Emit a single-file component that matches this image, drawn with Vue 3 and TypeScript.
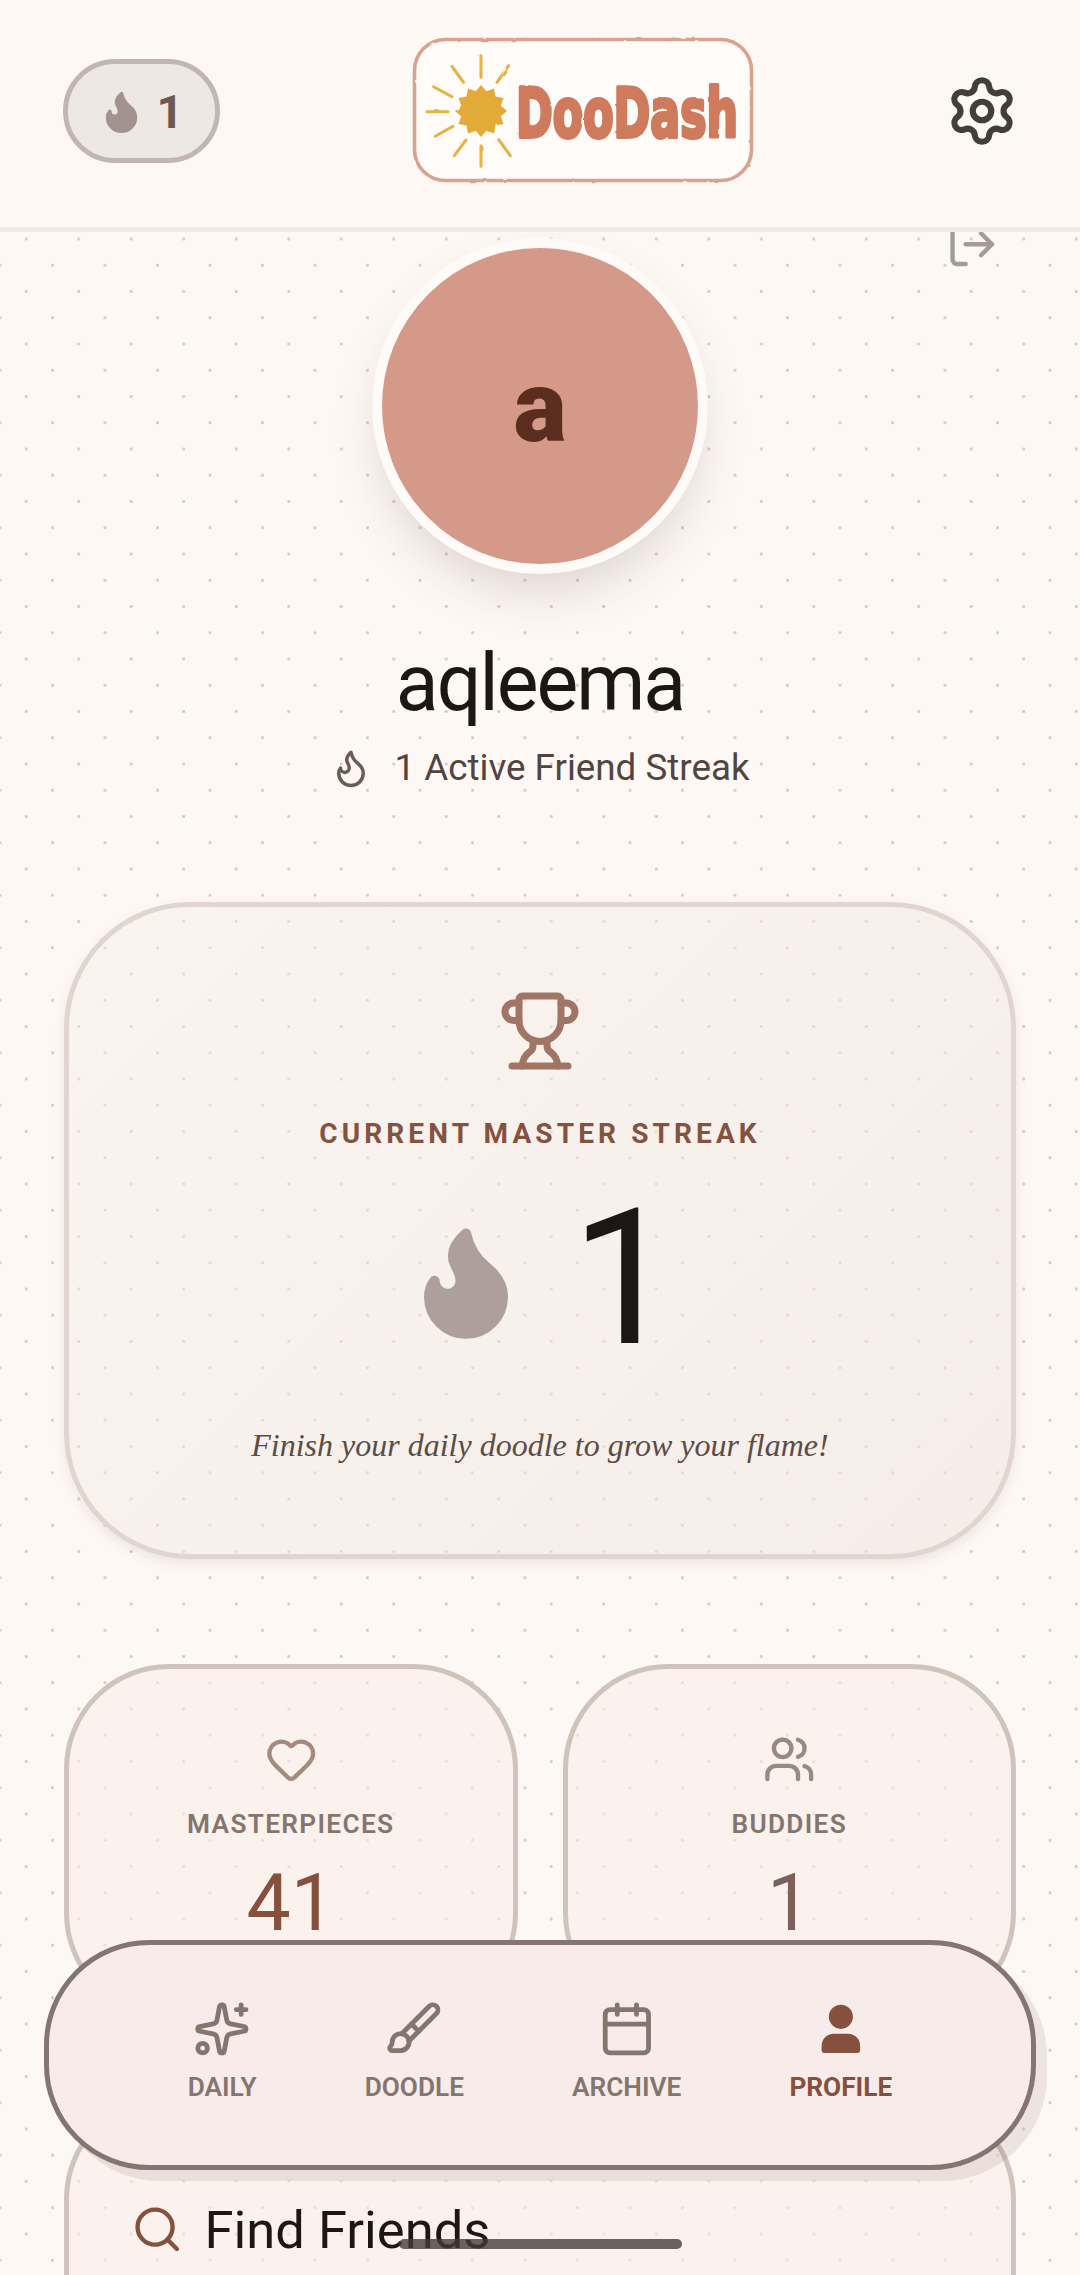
<template>
  <div class="screen">
    <header class="topbar">
      <div class="streak-pill">
        <svg class="pill-flame" viewBox="0 0 24 24"><path :d="flamePath" /></svg>
        <span>1</span>
      </div>

      <svg class="logo" viewBox="0 0 342 146" role="img" aria-label="DooDash">
        <defs>
          <filter id="rough" x="-5%" y="-5%" width="110%" height="110%">
            <feTurbulence type="fractalNoise" baseFrequency="0.09" numOctaves="2" seed="4" />
            <feDisplacementMap in="SourceGraphic" scale="2.2" />
            <feGaussianBlur stdDeviation="0.6" />
          </filter>
        </defs>
        <g filter="url(#rough)">
          <rect x="2.5" y="2.5" width="337" height="141" rx="31" fill="#fffbf8" stroke="#d9a28d" stroke-width="3.6" />
          <path v-for="ray in sunRays" :key="ray" :d="ray" class="ray" />
          <polygon :points="sunPoints" fill="#e2ab37" />
          <text x="104" y="100" class="logo-text" textLength="222" lengthAdjust="spacingAndGlyphs">DooDash</text>
        </g>
      </svg>

      <svg class="gear" viewBox="0 0 24 24">
        <path d="M9.671 4.136a2.34 2.34 0 0 1 4.659 0 2.34 2.34 0 0 0 3.319 1.915 2.34 2.34 0 0 1 2.33 4.033 2.34 2.34 0 0 0 0 3.831 2.34 2.34 0 0 1-2.33 4.033 2.34 2.34 0 0 0-3.319 1.915 2.34 2.34 0 0 1-4.659 0 2.34 2.34 0 0 0-3.32-1.915 2.34 2.34 0 0 1-2.33-4.033 2.34 2.34 0 0 0 0-3.831A2.34 2.34 0 0 1 6.35 6.051a2.34 2.34 0 0 0 3.319-1.915" />
        <circle cx="12" cy="12" r="3" />
      </svg>
    </header>

    <main class="content">
      <section class="profile">
        <svg class="logout" viewBox="0 0 24 24">
          <path d="m16 17 5-5-5-5" />
          <path d="M21 12H9" />
          <path d="M9 21H5a2 2 0 0 1-2-2V5a2 2 0 0 1 2-2h4" />
        </svg>
        <div class="avatar">a</div>
        <h1 class="name">aqleema</h1>
        <div class="friend-streak">
          <svg class="friend-flame" viewBox="0 0 24 24"><path :d="flamePath" /></svg>
          <span>1 Active Friend Streak</span>
        </div>
      </section>

      <section class="master-card">
        <svg class="trophy" viewBox="0 0 24 24">
          <path d="M10 14.66v1.626a2 2 0 0 1-.976 1.696A5 5 0 0 0 7 21.978" />
          <path d="M14 14.66v1.626a2 2 0 0 0 .976 1.696A5 5 0 0 1 17 21.978" />
          <path d="M18 9h1.5a1 1 0 0 0 0-5H18" />
          <path d="M4 22h16" />
          <path d="M6 9a6 6 0 0 0 12 0V3a1 1 0 0 0-1-1H7a1 1 0 0 0-1 1z" />
          <path d="M6 9H4.5a1 1 0 0 1 0-5H6" />
        </svg>
        <p class="master-label">CURRENT MASTER STREAK</p>
        <div class="master-count">
          <svg class="big-flame" viewBox="0 0 24 24"><path :d="flamePath" /></svg>
          <span>1</span>
        </div>
        <p class="master-note">Finish your daily doodle to grow your flame!</p>
      </section>

      <section class="stats">
        <div class="stat-card">
          <svg class="stat-icon heart" viewBox="0 0 24 24">
            <path d="M2 9.5a5.5 5.5 0 0 1 9.591-3.676.56.56 0 0 0 .818 0A5.49 5.49 0 0 1 22 9.5c0 2.29-1.5 4-3 5.5l-5.492 5.313a2 2 0 0 1-3 .019L5 15c-1.5-1.5-3-3.2-3-5.5" />
          </svg>
          <p class="stat-label">MASTERPIECES</p>
          <p class="stat-value">41</p>
        </div>
        <div class="stat-card">
          <svg class="stat-icon users" viewBox="0 0 24 24">
            <path d="M16 21v-2a4 4 0 0 0-4-4H6a4 4 0 0 0-4 4v2" />
            <path d="M16 3.128a4 4 0 0 1 0 7.744" />
            <path d="M22 21v-2a4 4 0 0 0-3-3.87" />
            <circle cx="9" cy="7" r="4" />
          </svg>
          <p class="stat-label">BUDDIES</p>
          <p class="stat-value muted">1</p>
        </div>
      </section>

      <section class="friends-card">
        <div class="friends-title">
          <svg class="search" viewBox="0 0 24 24">
            <path d="m21 21-4.34-4.34" />
            <circle cx="11" cy="11" r="8" />
          </svg>
          <span>Find Friends</span>
        </div>
      </section>
    </main>

    <nav class="bottom-nav">
      <div v-for="item in navItems" :key="item.label" class="nav-item" :class="{ active: item.active }">
        <svg class="nav-icon" viewBox="0 0 24 24">
          <path v-for="d in item.paths" :key="d" :d="d" />
          <circle v-if="item.circle" :cx="item.circle[0]" :cy="item.circle[1]" :r="item.circle[2]" />
          <rect v-if="item.label === 'ARCHIVE'" x="3" y="4" width="18" height="18" rx="2" />
        </svg>
        <span>{{ item.label }}</span>
      </div>
    </nav>

    <div class="home-bar"></div>
  </div>
</template>

<script setup lang="ts">
interface NavItem {
  label: string;
  paths: string[];
  circle?: [number, number, number];
  active?: boolean;
}

const flamePath =
  'M8.5 14.5A2.5 2.5 0 0 0 11 12c0-1.38-.5-2-1-3-1.072-2.143-.224-4.054 2-6 .5 2.5 2 4.9 4 6.5 2 1.6 3 3.5 3 5.5a7 7 0 1 1-14 0c0-1.153.433-2.294 1-3a2.5 2.5 0 0 0 2.5 2.5z';

const navItems: NavItem[] = [
  {
    label: 'DAILY',
    paths: [
      'M11.017 2.814a1 1 0 0 1 1.966 0l1.051 5.558a2 2 0 0 0 1.594 1.594l5.558 1.051a1 1 0 0 1 0 1.966l-5.558 1.051a2 2 0 0 0-1.594 1.594l-1.051 5.558a1 1 0 0 1-1.966 0l-1.051-5.558a2 2 0 0 0-1.594-1.594l-5.558-1.051a1 1 0 0 1 0-1.966l5.558-1.051a2 2 0 0 0 1.594-1.594z',
      'M20 2v4',
      'M22 4h-4',
    ],
    circle: [4, 20, 2],
  },
  {
    label: 'DOODLE',
    paths: [
      'm11 10 3 3',
      'M6.5 21A3.5 3.5 0 1 0 3 17.5a2.62 2.62 0 0 1-.708 1.792A1 1 0 0 0 3 21z',
      'M9.969 17.031 21.378 5.624a1 1 0 0 0-3.002-3.002L6.967 14.031',
    ],
  },
  {
    label: 'ARCHIVE',
    paths: ['M8 2v4', 'M16 2v4', 'M3 10h18'],
  },
  {
    label: 'PROFILE',
    paths: ['M19 21v-2a4 4 0 0 0-4-4H9a4 4 0 0 0-4 4v2z'],
    circle: [12, 7, 4],
    active: true,
  },
];

const sunRays = [
  'M69 18.7V40.3',
  'M40 29.3 51.6 45.3',
  'M96.6 28.7 85 45.3',
  'M21.6 49.7 40 59.7',
  'M15 74.7H36',
  'M23.3 99.3 41 89.3',
  'M42.3 118.7 54 103',
  'M69 108.7V129.3',
  'M86.6 102.7 98.3 118.7',
];

// twelve pointed star for the sun
const sunPoints = Array.from({ length: 24 }, (_, i) => {
  const r = i % 2 === 0 ? 26 : 20.5;
  const a = (i * Math.PI) / 12 - Math.PI / 2;
  return `${(69 + r * Math.cos(a)).toFixed(1)},${(74 + r * Math.sin(a)).toFixed(1)}`;
}).join(' ');
</script>

<style scoped>
.screen {
  position: relative;
  display: flex;
  flex-direction: column;
  height: 2275px;
  overflow: hidden;
  background: #fef8f5;
  color: #1c1715;
  font-family: Roboto, "Liberation Sans", sans-serif;
}

svg {
  flex: none;
  display: block;
  fill: none;
  stroke: currentColor;
  stroke-width: 2;
  stroke-linecap: round;
  stroke-linejoin: round;
}

p,
h1 {
  margin: 0;
}

.topbar {
  flex: none;
  display: flex;
  align-items: center;
  justify-content: space-between;
  height: 232px;
  box-sizing: border-box;
  padding: 0 62px 5px 63px;
  background: #fef8f5;
  border-bottom: 5px solid #f1ebe8;
}

.streak-pill {
  display: flex;
  align-items: center;
  justify-content: center;
  gap: 19px;
  box-sizing: border-box;
  width: 157px;
  height: 104px;
  border: 5px solid #c1b6b3;
  border-radius: 52px;
  background: #eee8e5;
  color: #6b5a53;
  font-size: 47px;
  font-weight: 700;
}

.pill-flame {
  width: 47px;
  height: 47px;
  margin-left: -2px;
  margin-right: -7px;
  color: #a2938e;
  fill: currentColor;
}

.logo {
  width: 342px;
  height: 146px;
  margin-top: -2px;
  overflow: visible;
  stroke: none;
}

.ray {
  stroke: #e4b244;
  stroke-width: 3;
}

.logo-text {
  font-family: "DejaVu Sans", sans-serif;
  font-size: 68px;
  font-weight: 700;
  fill: #cf7a5d;
  stroke: #cf7a5d;
  stroke-width: 4;
}

.gear {
  width: 74px;
  height: 74px;
  margin-right: -1px;
  color: #453d3a;
}

.content {
  flex: 1;
  min-height: 0;
  overflow: hidden;
  padding: 6px 64px 0;
  background-color: #fef8f5;
  background-image:
    radial-gradient(circle, rgba(125, 100, 90, 0.32) 1.2px, transparent 1.7px),
    radial-gradient(circle, rgba(125, 100, 90, 0.32) 1.2px, transparent 1.7px);
  background-size: 52.5px 52.5px;
  background-position: 0 -19.25px, -26.25px 7px;
}

.profile {
  position: relative;
  display: flex;
  flex-direction: column;
  align-items: center;
}

.logout {
  position: absolute;
  top: -20px;
  right: 18px;
  width: 52.5px;
  height: 52.5px;
  color: #a49b97;
}

.avatar {
  display: flex;
  align-items: center;
  justify-content: center;
  box-sizing: border-box;
  width: 336px;
  height: 336px;
  border: 10px solid #fefaf8;
  border-radius: 50%;
  background: #d49988;
  box-shadow: 0 26px 50px -8px rgba(70, 50, 40, 0.17);
  color: #5a2d1f;
  font-size: 100px;
  font-weight: 900;
}

.name {
  margin-top: 63px;
  font-size: 78.75px;
  font-weight: 400;
  letter-spacing: -0.025em;
  line-height: 92px;
}

.friend-streak {
  display: flex;
  align-items: center;
  gap: 22px;
  margin-top: 18px;
  color: #52443f;
  font-size: 36.75px;
  line-height: 42px;
}

.friend-flame {
  width: 42px;
  height: 42px;
  color: #6d5c55;
}

.master-card {
  display: flex;
  flex-direction: column;
  align-items: center;
  margin-top: 113px;
  padding: 82px 0 85px;
  border: 5px solid #e0d6cf;
  border-radius: 126px;
  background: linear-gradient(135deg, rgba(245, 238, 232, 0.45), rgba(240, 230, 224, 0.6));
  box-shadow: 0 5px 12px rgba(100, 70, 50, 0.1);
}

.trophy {
  width: 84px;
  height: 84px;
  color: #a07565;
}

.master-label {
  margin-top: 43px;
  color: #85523f;
  font-size: 28px;
  font-weight: 700;
  letter-spacing: 0.147em;
  line-height: 36px;
}

.master-count {
  display: flex;
  align-items: center;
  gap: 42px;
  margin-top: 32px;
  font-size: 189px;
  line-height: 190px;
}

.big-flame {
  width: 126px;
  height: 126px;
  margin-top: 4px;
  color: #ae9f9b;
  fill: currentColor;
}

.master-note {
  margin-top: 47px;
  color: #5b4c46;
  font-family: "Liberation Serif", serif;
  font-size: 32px;
  font-style: italic;
  line-height: 48px;
}

.stats {
  display: grid;
  grid-template-columns: 1fr 1fr;
  gap: 45px;
  margin-top: 105px;
}

.stat-card {
  display: flex;
  flex-direction: column;
  align-items: center;
  padding: 64px 0;
  border: 5px solid #cfc3bc;
  border-radius: 105px;
  background: rgba(248, 236, 232, 0.6);
}

.stat-icon {
  width: 52.5px;
  height: 52.5px;
}

.heart {
  color: #a68a7e;
}

.users {
  color: #978a85;
}

.stat-label {
  margin-top: 21px;
  color: #85756f;
  font-size: 26.25px;
  font-weight: 600;
  letter-spacing: 0.05em;
  line-height: 34px;
}

.stat-value {
  margin-top: 16px;
  color: #85503c;
  font-size: 78.75px;
  line-height: 92px;
}

.stat-value.muted {
  color: #7a625a;
}

.friends-card {
  height: 320px;
  margin-top: 76px;
  padding: 100px 62px 0;
  border: 5px solid #cfc3bc;
  border-radius: 105px;
  background: rgba(248, 236, 232, 0.6);
}

.friends-title {
  display: flex;
  align-items: center;
  gap: 21px;
  font-size: 52.5px;
  line-height: 62px;
}

.search {
  width: 52.5px;
  height: 52.5px;
  color: #85503c;
}

.bottom-nav {
  position: absolute;
  top: 1940px;
  left: 44px;
  display: flex;
  justify-content: center;
  gap: 108px;
  box-sizing: border-box;
  width: 992px;
  height: 230px;
  padding-top: 55px;
  border: 5px solid #857572;
  border-radius: 105px;
  background: #f8ecea;
  box-shadow: 11px 11px 0 rgba(90, 60, 50, 0.1);
}

.nav-item {
  display: flex;
  flex-direction: column;
  align-items: center;
  gap: 12px;
  color: #85756f;
  font-size: 26.25px;
  font-weight: 600;
  line-height: 34px;
}

.nav-item.active {
  color: #85503c;
  font-weight: 700;
}

.nav-item.active .nav-icon {
  fill: currentColor;
}

.nav-icon {
  width: 57.75px;
  height: 57.75px;
}

.home-bar {
  position: absolute;
  top: 2239px;
  left: 399px;
  width: 283px;
  height: 10px;
  border-radius: 5px;
  background: rgba(70, 60, 55, 0.8);
}
</style>
